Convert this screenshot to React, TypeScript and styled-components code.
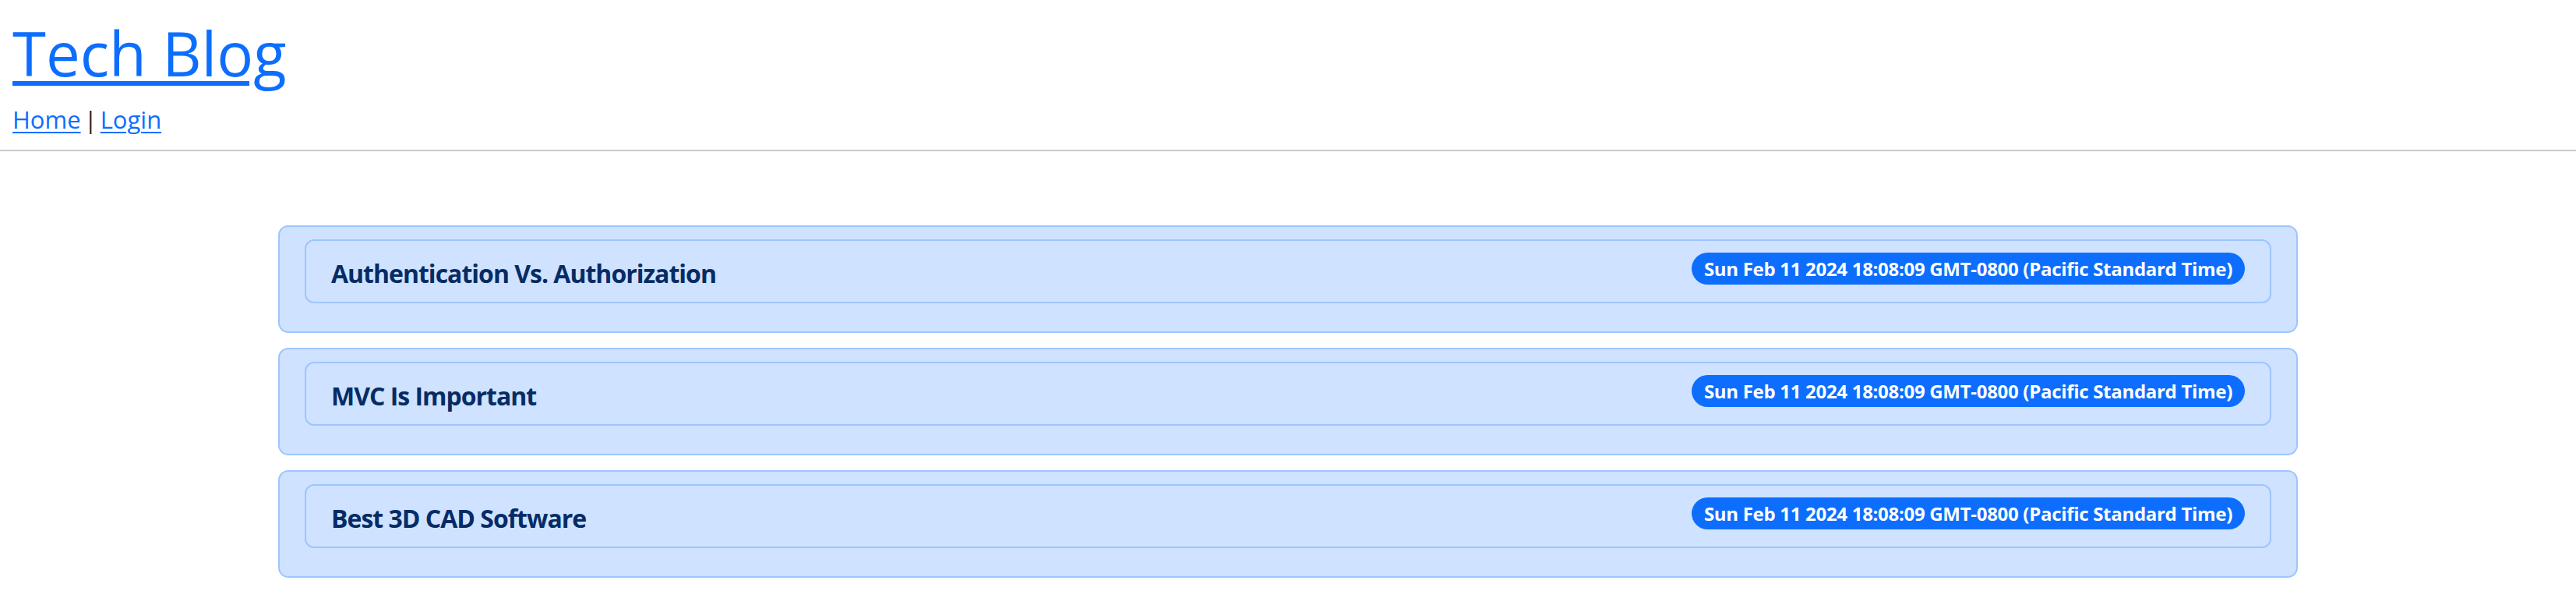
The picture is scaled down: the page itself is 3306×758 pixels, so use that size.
import { FC } from 'react'
import styled, { createGlobalStyle } from 'styled-components'

const posts = [
  { id: 1, title: 'Authentication Vs. Authorization', date: 'Sun Feb 11 2024 18:08:09 GMT-0800 (Pacific Standard Time)' },
  { id: 2, title: 'MVC Is Important', date: 'Sun Feb 11 2024 18:08:09 GMT-0800 (Pacific Standard Time)' },
  { id: 3, title: 'Best 3D CAD Software', date: 'Sun Feb 11 2024 18:08:09 GMT-0800 (Pacific Standard Time)' },
]

const App: FC = () => {
  return (
    <>
      <GlobalStyle />
      <Header>
        <Brand><BrandLink href="#">Tech Blog</BrandLink></Brand>
        <Nav>
          <NavLink href="#">Home</NavLink>
          <Divider>|</Divider>
          <NavLink href="#">Login</NavLink>
        </Nav>
      </Header>
      <Rule />
      <Main>
        {posts.map((post) => (
          <PostCard key={post.id}>
            <PostRow>
              <PostTitle>{post.title}</PostTitle>
              <DateBadge>{post.date}</DateBadge>
            </PostRow>
          </PostCard>
        ))}
      </Main>
    </>
  )
}

export default App

const GlobalStyle = createGlobalStyle`
  html, body {
    margin: 0;
    padding: 0;
    background: #fff;
  }

  body {
    font-family: "Open Sans", "Noto Sans", sans-serif;
    color: #212529;
    font-size: 32px;
    line-height: 1.5;
  }
`

const Header = styled.header`
  padding: 22px 16px 0;
`

const Brand = styled.h1`
  margin: 0 0 13px;
  font-size: 78px;
  font-weight: 400;
  line-height: 1.2;
`

const BrandLink = styled.a`
  color: #0d6efd;
  text-decoration: underline;
  text-decoration-thickness: 6px;
  text-underline-offset: 6px;
`

const Nav = styled.nav`
  display: flex;
  align-items: baseline;
  gap: 4px;
  font-size: 31px;
  line-height: 48px;
`

const NavLink = styled.a`
  color: #0d6efd;
  text-decoration: underline;
  text-decoration-thickness: 2px;
  text-underline-offset: 4px;
`

const Divider = styled.span`
  color: #212529;
`

const Rule = styled.hr`
  margin: 15px 0 0;
  border: 0;
  border-top: 2px solid #c8c9ca;
`

const Main = styled.main`
  width: 2592px;
  margin: 95px auto 0;
  display: flex;
  flex-direction: column;
  gap: 19px;
`

const PostCard = styled.section`
  box-sizing: border-box;
  height: 138px;
  padding: 16px 32px 36px;
  background: #cfe2ff;
  border: 2px solid #9ec5fe;
  border-radius: 13px;
`

const PostRow = styled.div`
  box-sizing: border-box;
  height: 82px;
  padding: 0 32px;
  display: flex;
  align-items: center;
  justify-content: space-between;
  border: 2px solid #9ec5fe;
  border-radius: 12px;
`

const PostTitle = styled.h5`
  margin: 8px 0 0;
  font-size: 32px;
  font-weight: 700;
  letter-spacing: -1px;
  line-height: 1.2;
  color: #052c65;
`

const DateBadge = styled.span`
  display: inline-flex;
  align-items: center;
  box-sizing: border-box;
  height: 41px;
  margin-bottom: 6px;
  padding: 0 16px;
  border-radius: 999px;
  background: #0d6efd;
  color: #fff;
  font-size: 24px;
  font-weight: 700;
  letter-spacing: -0.3px;
  line-height: 1;
  white-space: nowrap;
`
